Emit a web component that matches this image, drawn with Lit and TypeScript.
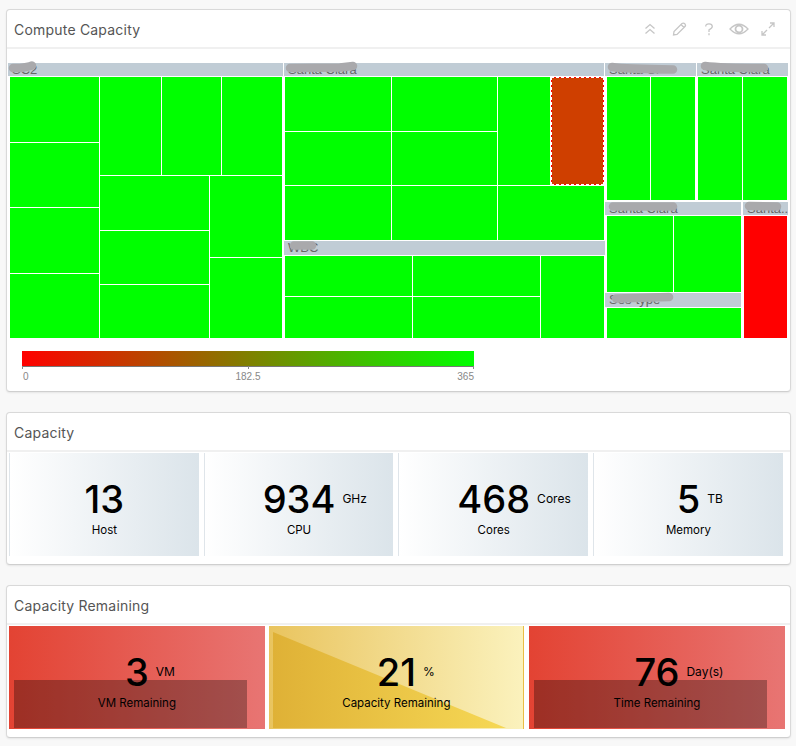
import { LitElement, html, css, svg } from "lit";
import { customElement } from "lit/decorators.js";

type R = [number, number, number, number];
const OX = 6, OY = 49;

// x0, y0, x1, y1 in page px
const green: R[] = [
  [10,77,99,142],[10,143,99,207],[10,208,99,273],[10,274,99,338],
  [100,77,161,175],[162,77,221,175],[222,77,282,175],
  [100,176,209,230],[100,231,209,284],[100,285,209,338],
  [210,176,282,257],[210,258,282,338],
  [285,77,391,131],[392,77,497,131],[285,132,391,185],[392,132,497,185],[285,186,391,240],[392,186,497,240],
  [498,77,550,185],[498,186,604,240],
  [285,256,412,296],[413,256,540,296],[285,297,412,338],[413,297,540,338],[541,256,604,338],
  [607,77,650,200],[651,77,695,200],[698,77,742,200],[743,77,787,200],
  [607,216,673,292],[674,216,741,292],[607,308,741,338],
];
const heads: { r: R; t: string; s: string }[] = [
  { r: [8,63,283,76], t: "SC2", s: "M13 68 L20 68 Q28 67 32 65.5" },
  { r: [284,63,604,76], t: "Santa Clara", s: "M290 68 L340 67.5 L353 66" },
  { r: [605,63,696,76], t: "Santa Cl", s: "M612 67 Q625 69 673 69.5" },
  { r: [697,63,788,76], t: "Santa Clara", s: "M705 66 Q720 68 764 68" },
  { r: [284,241,605,255], t: "WBC", s: "M294 245.5 L312 245.5" },
  { r: [605,202,741,215], t: "Santa Clara", s: "M613 206.5 L673 206.5" },
  { r: [743,202,788,215], t: "Santa..", s: "M749 206 L777 206.5" },
  { r: [605,293,741,307], t: "Ses-type", s: "M616 298.5 L669 297" },
];

const tiles = [
  { n: "13", u: "", l: "Host" },
  { n: "934", u: "GHz", l: "CPU" },
  { n: "468", u: "Cores", l: "Cores" },
  { n: "5", u: "TB", l: "Memory" },
];

@customElement("app-root")
export class AppRoot extends LitElement {
  static styles = css`
    :host { display: block; width: 796px; height: 746px; overflow: hidden; background: #f8f8f8; font-family: "Inter", "Noto Sans", sans-serif; }
    .page { display: flex; flex-direction: column; gap: 20px; padding: 9px 5px 0 6px; }
    .card { background: #fff; border: 1px solid #d9d9d9; border-bottom-color: #cfcfcf; border-radius: 4px; box-shadow: 0 1px 2px rgba(0,0,0,.08); box-sizing: border-box; overflow: hidden; }
    .head { height: 36px; display: flex; align-items: center; justify-content: space-between; padding: 1px 10px 0 7px; border-bottom: 2px solid #f0f0f0; box-sizing: content-box; }
    .title { font-size: 14px; color: #555; letter-spacing: .2px; }
    .icons { display: flex; align-items: center; gap: 5.5px; }
    .ic { width: 24px; display: flex; justify-content: center; }
    .ic svg { display: block; fill: none; stroke: #c6c6c6; stroke-width: 1.3; }
    .map { position: relative; height: 290px; }
    .cell { position: absolute; background: #0f0; }
    .cell.red { background: #f00; }
    .cell.sel { background: #cf3f00; outline: 1px dashed #fff; outline-offset: -1px; box-shadow: inset 0 0 0 1px #f00; }
    .hd { position: absolute; background: #c0ccd5; font: 13px/12px "Liberation Sans", sans-serif; color: #666; padding: 1px 0 0 4px; box-sizing: border-box; white-space: nowrap; }
    .scrib { position: absolute; left: 0; top: 0; pointer-events: none; fill: none; stroke: #a9a9ac; stroke-width: 8.5; stroke-linecap: round; }
    .legend { padding: 12px 0 0 15px; }
    .bar { width: 452px; height: 15px; background: linear-gradient(90deg, #f00, #0f0); border-bottom: 1px solid #777; position: relative; }
    .bar i { position: absolute; top: 15px; width: 1px; height: 3px; background: #888; }
    .ticks { width: 452px; display: grid; grid-template-columns: 1fr auto 1fr; font: 10px/12px "Liberation Sans", sans-serif; color: #888; padding: 4px 0 0 0; }
    .ticks span:first-child { padding-left: 1px; }
    .ticks span:last-child { justify-self: end; }
    .body { display: flex; padding: 1px 0 0 2px; box-sizing: border-box; }
    .g-grey { gap: 5px; }
    .g-col { gap: 4.7px; }
    .tile { position: relative; height: 103px; display: flex; flex-direction: column; align-items: center; color: #000; box-sizing: border-box; overflow: hidden; }
    .t-grey { width: 189.7px; background: linear-gradient(90deg, #fff, #dbe4ea); border-left: 1px solid #dfe5ea; }
    .t-red { width: 255.7px; background: linear-gradient(90deg, #e34333, #e87573); }
    .t-yel { width: 255px; background: linear-gradient(90deg, #e9c45e, #fbf2bd); border-right: 1px solid #e9bd45; }
    .val { position: relative; font-size: 38px; font-weight: 500; line-height: 46px; margin-top: 23px; z-index: 2; }
    .unit { position: absolute; left: 100%; top: 15px; margin-left: 7px; font-size: 12px; font-weight: 400; line-height: 16px; white-space: nowrap; }
    .label { font-size: 11.5px; line-height: 16px; z-index: 2; }
    .shade { position: absolute; left: 4.7px; top: 54px; width: 233px; height: 48px; background: rgba(0,0,0,.3); }
    .tri { position: absolute; left: 0; top: 0; width: 100%; height: 100%; }
    .card1 { height: 383px; } .card2 { height: 153px; } .card3 { height: 153px; }
  `;

  private box(r: R) {
    return `left:${r[0] - OX - 1}px;top:${r[1] - OY}px;width:${r[2] - r[0]}px;height:${r[3] - r[1]}px`;
  }

  render() {
    return html`<div class="page">
      <section class="card card1">
        <div class="head">
          <span class="title">Compute Capacity</span>
          <div class="icons">
            <span class="ic"><svg width="14" height="14" viewBox="0 0 14 14"><path d="M2.5 6.5 L7 2.5 L11.5 6.5 M2.5 11.5 L7 7.5 L11.5 11.5"/></svg></span>
            <span class="ic"><svg width="15" height="14" viewBox="0 0 15 14"><path d="M1.5 13 L2 9.5 L10 1.5 Q11.5 .5 13 2 Q14 3.5 13 4.5 L5 12.5 Z M9 2.5 L12 5.5"/></svg></span>
            <span class="ic"><svg width="8" height="13" viewBox="0 0 8 13"><path d="M.7 3.5 Q.7 .8 4 .8 Q7.3 .8 7.3 3.5 Q7.3 5.2 4 6.8 L4 9 M4 10.3 L4 12.3"/></svg></span>
            <span class="ic"><svg width="20" height="14" viewBox="0 0 20 14"><path d="M1 7 Q10 -2.5 19 7 Q10 16.5 1 7 Z"/><circle cx="10" cy="7" r="3.5" stroke-width="1.8"/></svg></span>
            <span class="ic"><svg width="14" height="14" viewBox="0 0 14 14"><path d="M8 6 L13 1 M9 1 L13 1 L13 5 M6 8 L1 13 M1 9 L1 13 L5 13"/></svg></span>
          </div>
        </div>
        <div class="map">
          ${heads.map((h) => html`<div class="hd" style=${this.box(h.r)}>${h.t}</div>`)}
          ${green.map((r) => html`<div class="cell" style=${this.box(r)}></div>`)}
          <div class="cell sel" style=${this.box([551, 77, 604, 185])}></div>
          <div class="cell red" style=${this.box([744, 216, 787, 338])}></div>
          <svg class="scrib" width="790" height="290" viewBox="7 49 790 290">
            ${heads.map((h) => svg`<path d=${h.s}/>`)}
          </svg>
        </div>
        <div class="legend">
          <div class="bar"><i style="left:0"></i><i style="left:226px"></i><i style="left:451px"></i></div>
          <div class="ticks"><span>0</span><span>182.5</span><span>365</span></div>
        </div>
      </section>

      <section class="card card2">
        <div class="head"><span class="title">Capacity</span></div>
        <div class="body g-grey">
          ${tiles.map((t) => html`<div class="tile t-grey">
            <div class="val">${t.n}${t.u ? html`<span class="unit">${t.u}</span>` : ""}</div>
            <div class="label">${t.l}</div>
          </div>`)}
        </div>
      </section>

      <section class="card card3">
        <div class="head"><span class="title">Capacity Remaining</span></div>
        <div class="body g-col">
          <div class="tile t-red"><div class="shade"></div>
            <div class="val">3<span class="unit">VM</span></div><div class="label">VM Remaining</div></div>
          <div class="tile t-yel">
            <svg class="tri" viewBox="0 0 254 103" preserveAspectRatio="none">
              <defs><linearGradient id="g"><stop offset="0" stop-color="#dfb136"/><stop offset="1" stop-color="#f6d855"/></linearGradient></defs>
              <polygon points="4,6 237,102 4,102" fill="url(#g)"/>
            </svg>
            <div class="val">21<span class="unit">%</span></div><div class="label">Capacity Remaining</div></div>
          <div class="tile t-red"><div class="shade"></div>
            <div class="val">76<span class="unit">Day(s)</span></div><div class="label">Time Remaining</div></div>
        </div>
      </section>
    </div>`;
  }
}
